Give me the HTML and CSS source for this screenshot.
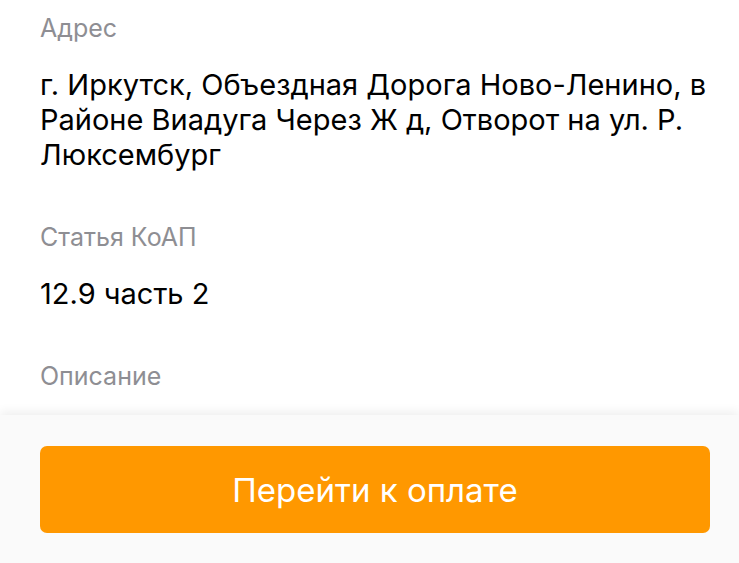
FILE: index.html
```html
<!DOCTYPE html>
<html lang="ru">
<head>
  <meta charset="UTF-8" />
  <meta name="viewport" content="width=device-width, initial-scale=1.0"/>
  <title>Штраф</title>
  <link rel="stylesheet" href="styles.css">
</head>
<body>

  <div class="details">
    <div class="field">
      <div class="label">Адрес</div>
      <div class="value">г. Иркутск, Объездная Дорога Ново-Ленино, в Районе Виадуга Через Ж д, Отворот на ул. Р. Люксембург</div>
    </div>
    <div class="field">
      <div class="label">Статья КоАП</div>
      <div class="value">12.9 часть 2</div>
    </div>
    <div class="field">
      <div class="label">Описание</div>
    </div>
  </div>

  <div class="footer">
    <button class="pay-btn">Перейти к оплате</button>
  </div>

</body>
</html>
```

FILE: styles.css
```css
:root {
  --text-color: #000;
  --label-color: #8e8e93;
  --accent-color: #ff9800;
  --footer-bg: #fafafa;
}

* {
  margin: 0;
  padding: 0;
  box-sizing: border-box;
}

body {
  height: 100vh;
  display: flex;
  flex-direction: column;
  font-family: Inter, "Noto Sans", sans-serif;
  background: #fff;
  color: var(--text-color);
  overflow: hidden;
}

.details {
  flex: 1;
  overflow: hidden;
  padding: 0 20px 0 40px;
}

.field {
  padding: 14px 0 37px;
}

.label {
  font-size: 25px;
  line-height: 28px;
  color: var(--label-color);
}

.value {
  margin-top: 25px;
  font-size: 29px;
  line-height: 35px;
}

.footer {
  flex: none;
  height: 148px;
  padding: 31px 29px 30px 40px;
  background: var(--footer-bg);
  box-shadow: 0 -3px 10px rgba(0, 0, 0, 0.07);
  position: relative;
  z-index: 1;
}

.pay-btn {
  width: 100%;
  height: 87px;
  border: none;
  border-radius: 7px;
  background: var(--accent-color);
  color: #fff;
  font-family: inherit;
  font-size: 33px;
  cursor: pointer;
}
```
